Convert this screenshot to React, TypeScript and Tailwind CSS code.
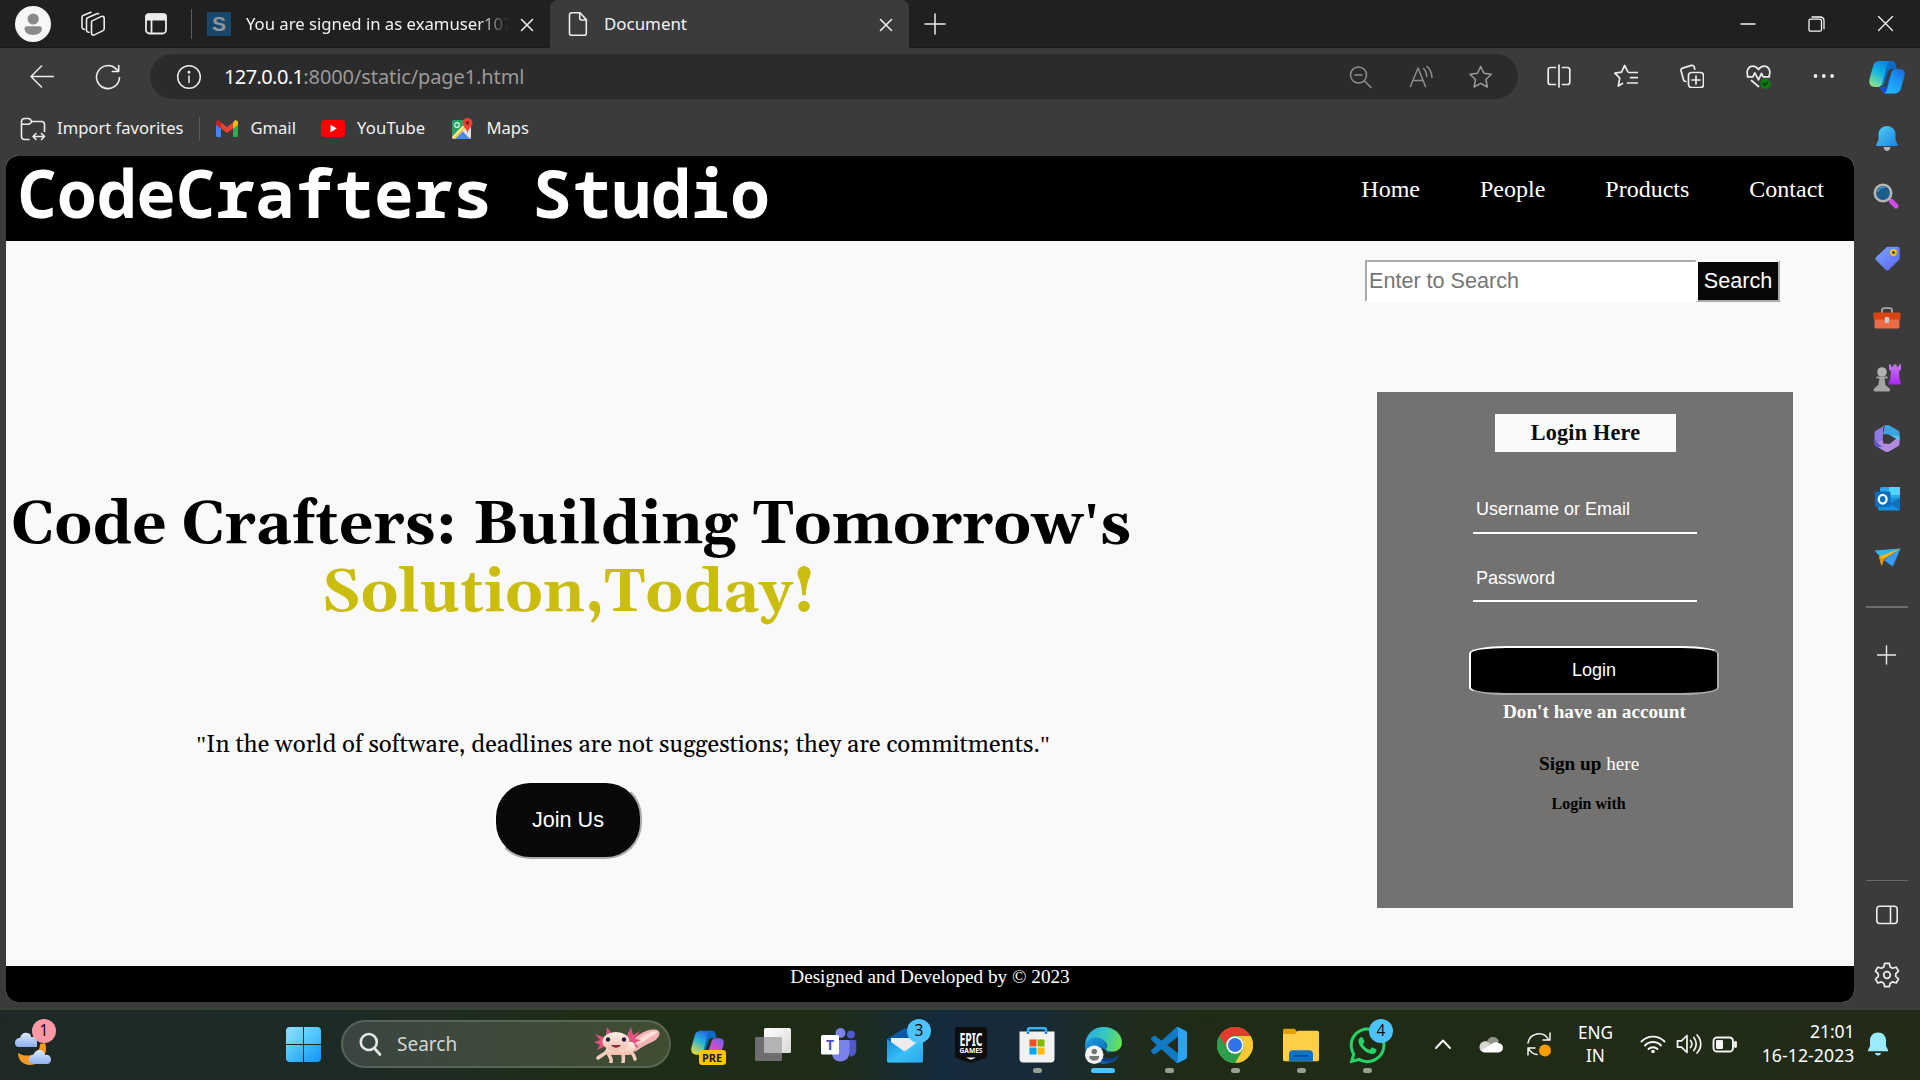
import type { ReactNode } from "react";
import { FaWhatsapp } from "react-icons/fa";

const ui = "font-['Segoe_UI','Noto_Sans',sans-serif]";
const arial = "font-['Liberation_Sans',Arial,sans-serif]";
const times = "font-['Liberation_Serif','Times_New_Roman',serif]";
const georgia = "font-['Gelasio',Georgia,'DejaVu_Serif',serif]";

type LineProps = { w?: number; h?: number; sw?: number; className?: string; children: ReactNode };

/* Outline icon drawn one unit per pixel */
function Line({ w = 24, h = 24, sw = 1.5, className = "text-[#ececec]", children }: LineProps) {
  return (
    <svg width={w} height={h} viewBox={`0 0 ${w} ${h}`} fill="none" stroke="currentColor" strokeWidth={sw} strokeLinecap="round" strokeLinejoin="round" className={`shrink-0 ${className}`}>
      {children}
    </svg>
  );
}

function Art({ w, h, children, className = "" }: { w: number; h: number; children: ReactNode; className?: string }) {
  return (
    <svg width={w} height={h} viewBox={`0 0 ${w} ${h}`} className={`shrink-0 ${className}`}>
      {children}
    </svg>
  );
}

function CloseX({ className = "" }: { className?: string }) {
  return (
    <Line w={14} h={14} sw={1.6} className={`text-[#ececec] ${className}`}>
      <path d="M1.5 1.5l11 11M12.5 1.5l-11 11" />
    </Line>
  );
}

/* ---------- Browser chrome ---------- */

function TabStrip() {
  return (
    <div className="flex h-12 bg-[#202020]">
      <div className="flex w-[550px] items-center border-b border-[#191919]">
        <Art w={36} h={36} className="ml-[15px]">
          <circle cx="18" cy="18" r="18" fill="#f7f7f7" />
          <circle cx="18.2" cy="13" r="5.6" fill="#8a8a8a" />
          <path d="M9.5 22.6c0-1.5 1-2.4 2.4-2.4h12.6c1.4 0 2.4.9 2.4 2.4 0 4.200-3.700 6.400-8.700 6.400s-8.700-2.200-8.700-6.400z" fill="#8a8a8a" />
        </Art>
        <Line w={26} h={26} sw={1.6} className="ml-[29px] text-[#ececec]">
          <path d="M11.500 11.200c0-.8.400-1.300 1.100-1.600l8.900-4.200c1.400-.6 2.700.2 2.700 1.700v10.600c0 .9-.4 1.500-1.200 1.900l-8.600 4.300c-1.500.7-2.900-.1-2.900-1.700z" />
          <path d="M9 21.300l-1.200-.3c-.9-.3-1.300-.9-1.300-1.800V8.400c0-.8.400-1.300 1.100-1.700l9.200-4c.7-.3 1.300-.2 1.800.1M4.500 18.500l-1.300-.6c-.8-.3-1.200-.9-1.200-1.700V6.300c0-.8.400-1.400 1.100-1.700L11 1.300" />
        </Line>
        <Line w={24} h={24} sw={1.8} className="ml-[38px] text-[#ececec]">
          <rect x="2" y="2.500" width="20" height="19" rx="3.500" />
          <path d="M2 4.500c0-1.300 1-2.400 2.500-2.400h15c1.500 0 2.500 1.100 2.500 2.400v3H2z" fill="currentColor" />
          <path d="M7.500 7v14" />
        </Line>
        <div className="ml-[23px] h-[30px] w-px bg-[#5c5c5c]" />
        <div className="ml-[15px] flex size-6 items-center justify-center bg-[#17476a] font-['Liberation_Sans'] text-[21px] leading-none font-bold text-[#8f969c]">S</div>
        <div className={`${ui} ml-[15px] w-[264px] overflow-hidden text-[16.7px] whitespace-nowrap text-[#f2f2f2] [mask-image:linear-gradient(to_right,black_232px,transparent_263px)]`}>
          You are signed in as examuser107
        </div>
        <CloseX className="mt-[2px] ml-[10px]" />
      </div>
      <div className="flex w-[359px] items-center rounded-t-lg bg-[#3b3b3b]">
        <Line w={20} h={26} sw={1.6} className="ml-[18px] text-[#ececec]">
          <path d="M3.500 1.800H12l6.300 6.800v13.600a2 2 0 0 1-2 2H3.500a2 2 0 0 1-2-2V3.800a2 2 0 0 1 2-2zM11.700 2v5a2 2 0 0 0 2 2h4.300" />
        </Line>
        <div className={`${ui} ml-[16px] text-[16.9px] text-[#f2f2f2]`}>Document</div>
        <CloseX className="mt-[2px] mr-[16px] ml-auto" />
      </div>
      <div className="flex flex-1 items-center border-b border-[#191919]">
        <Line w={22} h={22} sw={1.5} className="ml-[15px] text-[#ececec]">
          <path d="M11 1v20M1 11h20" />
        </Line>
        <div className="mr-[26px] ml-auto flex items-center gap-[52px]">
          <Line w={16} h={16} sw={1.3} className="text-[#f5f5f5]">
            <path d="M1 8h14" />
          </Line>
          <Line w={17} h={16} sw={1.3} className="text-[#f5f5f5]">
            <rect x="1" y="3.200" width="12.500" height="12" rx="1.500" />
            <path d="M4 1h8.500a3.500 3.500 0 0 1 3.500 3.500v8.200" />
          </Line>
          <Line w={17} h={17} sw={1.3} className="text-[#f5f5f5]">
            <path d="M1.500 1.500l14 14M15.500 1.500l-14 14" />
          </Line>
        </div>
      </div>
    </div>
  );
}

function Toolbar() {
  return (
    <div className="flex h-[57px] items-center pl-[30px]">
      <Line>
        <path d="M1 11.500h22.500M11.500 1L1 11.500l10.500 10.500" />
      </Line>
      <Line w={26} h={26} className="ml-[41px] text-[#ececec]" sw={1.6}>
        <path d="M24.500 13.500A11.500 11.500 0 1 1 21 4.800l2.500 2.400M23.700 1.500v6h-6.400" />
      </Line>
      <div className="ml-[29px] flex h-[45px] w-[1368px] items-center rounded-full bg-[#2b2b2b] pr-[25px] pl-[26px]">
        <Line w={26} h={26}>
          <circle cx="13" cy="13" r="11.300" />
          <path d="M13 12v6.500" />
          <circle cx="13" cy="8.300" r=".7" fill="currentColor" />
        </Line>
        <div className={`${ui} ml-[22px] text-[20px] whitespace-nowrap text-[#9a9a9a]`}>
          <span className="tracking-[-0.6px] text-white">127.0.0.1</span>
          <span className="tracking-[-0.1px]">:8000/static/page1.html</span>
        </div>
        <div className="ml-auto flex gap-9">
          <Line className="text-[#8f8f8f]">
            <circle cx="9.500" cy="10" r="8" />
            <path d="M6 10h7M15.500 16l6.500 6.500" />
          </Line>
          <Line className="text-[#8f8f8f]">
            <path d="M1.500 21.500L9 3l7.500 18.500M4 15.500h10M14.500 3.500c2 1.800 3 4.500 3.200 8M18 1.500c3 2.500 4.700 6.300 5 11" />
          </Line>
          <Line className="text-[#9a9a9a]">
            <path d="M11.700 1.500l3.200 6.800 7.500 1-5.500 5.200 1.400 7.500-6.600-3.700L5.100 22l1.400-7.500L1 9.300l7.500-1z" />
          </Line>
        </div>
      </div>
      <div className="ml-[29px] flex gap-[42px]">
        <Line sw={1.7}>
          <path d="M8.500 3.500h-5a2.300 2.300 0 0 0-2.300 2.300v12.400a2.300 2.300 0 0 0 2.300 2.300h5M15.500 3.500h5a2.300 2.300 0 0 1 2.300 2.300v12.400a2.300 2.300 0 0 1-2.300 2.300h-5M12 1v22" />
        </Line>
        <Line sw={1.7} className="ml-px text-[#ececec]">
          <path d="M8.500 19.500L4.300 22l1.400-7.800L.9 9.200l6.600-1 3.200-6.800 3 6.300M15 8.500h8.500M16.500 13.700h7M13.500 19h10" />
        </Line>
        <Line sw={1.7}>
          <rect x="8.500" y="8.500" width="15" height="15" rx="3" />
          <path d="M16 12v8M12 16h8M5.800 17.500c-1.300 0-2-.6-2.300-1.700L1 6.700c-.3-1.300.2-2.200 1.500-2.600l9-2.700c1.300-.3 2.200.2 2.600 1.400l.7 2.400" />
        </Line>
        <Line w={25} h={25} sw={1.7} className="-mr-px text-[#ececec]">
          <path d="M2 12.500C-.5 6.500 3 2.200 6.800 2.200c2.500 0 4.300 1.300 5.700 3.300 1.400-2 3.200-3.300 5.700-3.300 3.800 0 7.300 4.300 4.800 9.800M1.500 12.800h5.300l2-4 3.700 7 3-6.500 1.700 3.500h6.300M5.500 16.500l7 6" />
          <circle cx="19.500" cy="19.500" r="5.200" fill="#107c10" stroke="none" />
          <path d="M17.300 19.700l1.600 1.600 3-3.200" stroke="#0a3d0a" />
        </Line>
        <Line>
          <g fill="currentColor" stroke="none">
            <circle cx="3.500" cy="12" r="1.900" />
            <circle cx="11.800" cy="12" r="1.900" />
            <circle cx="20.100" cy="12" r="1.900" />
          </g>
        </Line>
      </div>
    </div>
  );
}

function Bookmarks() {
  return (
    <div className={`${ui} flex h-[51px] items-center pb-1 text-[16.6px] text-[#f2f2f2]`}>
      <Line w={26} h={24} sw={1.6} className="ml-5 text-[#ececec]">
        <path d="M9 22.500H4.500a3 3 0 0 1-3-3v-15a3 3 0 0 1 3-3h3.700c1 0 1.600.3 2.200 1l1.600 2h9.500a3 3 0 0 1 3 3v7M1.500 7.300h6.700c1 0 1.600-.3 2.200-1l1.600-1.900M13.500 19.500h10M16 16.500l-3 3 3 3M21.500 16.500l3 3-3 3" />
      </Line>
      <span className="ml-[11px]">Import favorites</span>
      <div className="ml-4 h-6 w-px bg-[#5a5a5a]" />
      <Art w={22} h={17} className="ml-4">
        <path d="M0 2v13.500C0 16.300.7 17 1.500 17H5V8.300z" fill="#4285f4" />
        <path d="M22 2v13.500c0 .8-.7 1.500-1.500 1.500H17V8.300z" fill="#34a853" />
        <path d="M17 2.500v6l5-3.700V2.700C22 .7 20-.3 18.400.8z" fill="#fbbc04" />
        <path d="M5 8.500v-6l6 4.500 6-4.500v6L11 13z" fill="#ea4335" />
        <path d="M0 2.700v2.100l5 3.700v-6L3.600.8C2-.3 0 .7 0 2.700z" fill="#c5221f" />
      </Art>
      <span className="ml-3">Gmail</span>
      <Art w={24} h={17} className="ml-[25px]">
        <rect width="24" height="17" rx="4" fill="#f00" />
        <path d="M9.500 4.800v7.400l6.300-3.700z" fill="#fff" />
      </Art>
      <span className="ml-3 tracking-[0.2px]">YouTube</span>
      <Art w={22} h={22} className="ml-[27px]">
        <defs>
          <clipPath id="map"><rect x="0" y="2" width="19" height="19" rx="2" /></clipPath>
        </defs>
        <g clipPath="url(#map)">
          <rect y="2" width="19" height="19" fill="#1fa463" />
          <path d="M19 6v15h-3L8 13z" fill="#dedede" />
          <path d="M9.500 12L1 21h17z" fill="#4a89f3" />
          <path d="M0 18.500L14 4l3 3L3 21H0z" fill="#ffd04b" />
          <path d="M0 20.500L12 8" stroke="#fff" strokeWidth="1" />
        </g>
        <circle cx="5" cy="7" r="2.300" fill="none" stroke="#e8f5ee" strokeWidth="1.200" />
        <path d="M15.500 0a5 5 0 0 1 5 5c0 3.500-4 5-5 10-1-5-5-6.500-5-10a5 5 0 0 1 5-5z" fill="#ea4335" />
        <circle cx="15.500" cy="5" r="1.900" fill="#8c1f18" />
      </Art>
      <span className="ml-3">Maps</span>
    </div>
  );
}

/* ---------- Edge sidebar ---------- */

function CopilotMark({ id, size, pre }: { id: string; size: number; pre?: boolean }) {
  const a = pre ? ["#2463e8", "#27b4d8", "#e8d93c"] : ["#0a84e0", "#14b4e4", "#8de68a"];
  const b = pre ? ["#7b5cf0", "#d94fc0", "#ff8a5c"] : ["#1a6fe0", "#1c9cf5", "#22b8ff"];
  return (
    <svg width={size} height={size} viewBox="0 0 36 36" className={pre ? "shrink-0" : "-mt-[3px] shrink-0"}>
      <defs>
        <linearGradient id={`${id}a`} x1=".7" y1="0" x2=".2" y2="1">
          <stop offset="0" stopColor={a[0]} />
          <stop offset=".45" stopColor={a[1]} />
          <stop offset="1" stopColor={a[2]} />
        </linearGradient>
        <linearGradient id={`${id}b`} x1=".8" y1="0" x2=".2" y2="1">
          <stop offset="0" stopColor={b[0]} />
          <stop offset=".5" stopColor={b[1]} />
          <stop offset="1" stopColor={b[2]} />
        </linearGradient>
      </defs>
      <path d="M17 2h6c2 0 3 1 3.600 3l1.200 5h-5c-2.500 0-3.500 1.500-4 3.500L16 23c-.6 2.500-1 4-3 4z" fill="#0b6cc4" />
      <path d="M9 28h6c2 0 3-1 3.500-3l2-8 3 16c-2 2-8 2.500-10 0-1.500-2-2-5-4.500-5z" fill="#1450d2" />
      <path d="M11 2h11c-2.500 0-3.500 2-4.200 4.500L14 22c-.8 3.500-2 6-5 6H6c-4.500 0-6.500-3-5.500-8L4 7.500C5 3.500 7.500 2 11 2z" fill={`url(#${id}a)`} />
      <path d="M25 34.500H14c2.500 0 3.500-2 4.200-4.500L22 14.500c.8-3 2-4.500 5-4.500h3c4.500 0 6.500 2 5.500 7L32 29c-1 4-3.500 5.500-7 5.500z" fill={`url(#${id}b)`} />
    </svg>
  );
}

function SideCell({ children }: { children: ReactNode }) {
  return <div className="flex h-[60px] w-full items-center justify-center">{children}</div>;
}

function Sidebar() {
  return (
    <div className="flex w-[66px] flex-col items-center bg-[#3b3b3b] pb-[3px]">
      <SideCell><CopilotMark id="cp" size={36} /></SideCell>
      <SideCell>
        <Art w={22} h={25}>
          <defs><linearGradient id="bl" x1="0" y1="0" x2="1" y2="1"><stop stopColor="#4fd0f7" /><stop offset="1" stopColor="#1d83e2" /></linearGradient></defs>
          <path d="M7.500 21h7c-.5 2.500-1.800 4-3.500 4s-3-1.500-3.500-4z" fill="#b8b8b8" />
          <path d="M11 0c5 0 8.500 3.700 8.500 8.500V14l2.200 4.500c.4.900 0 1.500-.9 1.500H1.200c-.9 0-1.300-.6-.9-1.500L2.500 14V8.500C2.500 3.700 6 0 11 0z" fill="url(#bl)" />
        </Art>
      </SideCell>
      <SideCell>
        <Art w={26} h={26} className="-mt-1 -ml-0.5">
          <path d="M16 16l4 4" stroke="#8c8c8c" strokeWidth="3" />
          <path d="M18.500 18.500l4.500 4.500" stroke="#d04bf0" strokeWidth="5" strokeLinecap="round" />
          <circle cx="10" cy="10" r="8.200" fill="#1c5d8c" stroke="#b5b5b5" strokeWidth="2.600" />
          <path d="M5 9a5.500 5.500 0 0 1 7-4.500" stroke="#4a93c4" strokeWidth="1.500" fill="none" />
        </Art>
      </SideCell>
      <SideCell>
        <Art w={25} h={25}>
          <defs><linearGradient id="tg" x1="0" y1="0" x2="1" y2="1"><stop stopColor="#7aa8ff" /><stop offset="1" stopColor="#5b62f2" /></linearGradient></defs>
          <path d="M13 .8h9.500c1.300 0 2.200.9 2.200 2.200V12c0 .8-.2 1.400-.8 2L14 23.800c-1 1-2.300 1-3.300 0L1.200 14.300c-1-1-1-2.300 0-3.200l10-9.500c.5-.5 1.100-.8 1.800-.8z" fill="url(#tg)" />
          <circle cx="18.500" cy="6.500" r="2.500" fill="#4a4320" stroke="#f5c518" strokeWidth="1.800" />
        </Art>
      </SideCell>
      <SideCell>
        <Art w={28} h={22}>
          <path d="M9 6V3.500C9 2 9.800 1.200 11.300 1.200h5.400C18.200 1.200 19 2 19 3.500V6" fill="none" stroke="#a8a8a8" strokeWidth="1.800" />
          <rect x="1.500" y="10" width="25" height="11.500" rx="1.500" fill="#ea6b45" />
          <rect x=".5" y="5.500" width="27" height="7" rx="1.200" fill="#d8430f" />
          <rect x="11.800" y="10" width="4.400" height="6" rx="1" fill="#c9c9c9" />
        </Art>
      </SideCell>
      <SideCell>
        <Art w={28} h={28}>
          <defs><linearGradient id="rk" x1="0" y1="0" x2="0" y2="1"><stop stopColor="#c77bf5" /><stop offset="1" stopColor="#a824f2" /></linearGradient></defs>
          <path d="M16 .5h2v2h2.500V.5h3v2H26V.5h2v5l-2 2 .6 8.500 1.200 2v2.500H15.700V18l1.300-2L18 7.500l-2-2z" fill="url(#rk)" />
          <circle cx="9" cy="8" r="4.800" fill="#b2b2b2" />
          <path d="M3.500 12.500h11v2h-3l1 6.500 4 3.500c1 1 .8 3-.8 3H2c-1.600 0-1.800-2-.8-3l4-3.500 1.200-6.500h-3z" fill="#a3a3a3" />
        </Art>
      </SideCell>
      <SideCell>
        <Art w={26} h={27}>
          <path d="M11 0l4 .3 9 5.200c1 .6 1.500 1.500 1.500 2.600V15l-8.500-4.500L9 9z" fill="#3fa3e0" />
          <path d="M11 .3L2.500 5.200C1 6 .5 7 .5 8.500v10c0 1 .4 2 1.300 2.500L4 22.200 9 19V3.500z" fill="#8f7ae0" />
          <path d="M.8 19.300L8.500 15l1 3.500 6 .5 10-8v7.500c0 1.200-.5 2-1.500 2.700l-9 5.200c-1.300.7-2.700.7-4 0L2.200 21.200z" fill="#b08be0" />
          <path d="M25.500 11v4.500l-8-4.500-2.500-1z" fill="#4fc7f0" />
          <path d="M.5 9c0 6 2.500 10 8 12L4 22.500 1.500 21C.8 20.300.5 19.500.5 18.500z" fill="#5a57c0" />
          <circle cx="13" cy="13.500" r="4.300" fill="#3b3b3b" />
        </Art>
      </SideCell>
      <SideCell>
        <Art w={25} h={25}>
          <rect x="5" y="1" width="20" height="15" rx="1.500" fill="#28a8ea" />
          <rect x="14" y="1" width="11" height="8" fill="#50d9ff" />
          <path d="M3 12h22v11c0 .8-.6 1.500-1.500 1.500h-19C3.600 24.500 3 23.800 3 23z" fill="#1490df" />
          <path d="M25 12v12L14 17.500z" fill="#0f6fc0" />
          <rect y="5.500" width="15.500" height="15.500" rx="1.500" fill="#0f6cbd" />
          <ellipse cx="7.700" cy="13.200" rx="3.900" ry="4.300" fill="none" stroke="#fff" strokeWidth="2.300" />
        </Art>
      </SideCell>
      <SideCell>
        <Art w={27} h={20}>
          <path d="M.5 2.500L26.500.5 8 11z" fill="#32b5e8" />
          <path d="M26.500.5L19 18.500 10 12z" fill="#2b86ea" />
          <path d="M26.500.5L10 12l8 6z" fill="#3b9cf5" />
          <path d="M26.500.5L5 8.500l2 7.500 1 1.500 1.500-6z" fill="#fbb81c" />
          <path d="M5 8.500l2.500 9.500 2.500-6z" fill="#e8930c" />
        </Art>
      </SideCell>
      <div className="mt-[18px] h-[2px] w-[42px] bg-[#6e6e6e]" />
      <div className="mt-[17px] flex h-[60px] items-center">
        <Line w={20} h={20} sw={1.4}><path d="M9.500 1v18M.5 10h18" /></Line>
      </div>
      <div className="mt-auto h-px w-[42px] bg-[#6a6a6a]" />
      <div className="mt-1 flex h-[60px] items-center">
        <Line w={24} h={20} sw={1.6}>
          <rect x="1.800" y="1.300" width="20.400" height="17.200" rx="3" />
          <path d="M15.500 1.500v17" />
        </Line>
      </div>
      <SideCell>
        <Line w={26} h={26} sw={1.7}>
          <circle cx="13" cy="13" r="3.300" />
          <path d="M10.700 1.300h4.600l.9 3.700 2.300 1.300 3.700-1.100 2.300 4-2.800 2.600v2.600l2.800 2.600-2.300 4-3.700-1.100-2.300 1.300-.9 3.500h-4.600l-.9-3.500-2.300-1.300-3.700 1.100-2.300-4 2.800-2.600v-2.600L1.500 9.200l2.300-4 3.700 1.100L9.800 5z" />
        </Line>
      </SideCell>
    </div>
  );
}

/* ---------- Web page ---------- */

function LoginCard() {
  return (
    <div className={`${times} mt-[90px] ml-[246px] flex h-[516px] w-[416px] shrink-0 flex-col items-start bg-[#737270]`}>
      <div className="mt-[22px] ml-[118px] flex h-[38px] w-[181px] items-center justify-center bg-[#f9fbfa] text-[22.2px] font-bold tracking-[0.2px] text-[#0a0a0a]">
        Login Here
      </div>
      <div className={`${arial} mt-[38px] ml-[96px] flex h-[44px] w-[224px] items-start border-b-2 border-white pt-[6px] pl-[3px] text-[18px] text-white`}>
        Username or Email
      </div>
      <div className={`${arial} mt-[24px] ml-[96px] flex h-[44px] w-[224px] items-start border-b-2 border-white pt-[7px] pl-[3px] text-[18px] text-white`}>
        Password
      </div>
      <button className={`${arial} mt-[44px] ml-[92px] h-[49px] w-[250px] rounded-[15%] border-2 border-white bg-black text-[18px] text-white [border-style:outset]`}>
        Login
      </button>
      <div className="mt-[3px] ml-[126px] text-[19.2px] leading-[27px] font-bold whitespace-nowrap text-white">Don't have an account</div>
      <div className="mt-[25px] ml-[162px] text-[19.2px] leading-[27px] text-white">
        <span className="font-bold text-black">Sign up</span> here
      </div>
      <div className="mt-[13px] ml-[174.5px] text-[16px] leading-[27px] font-bold text-black">Login with</div>
    </div>
  );
}

function Page() {
  return (
    <div className="ml-1.5 flex h-[846px] flex-col overflow-hidden rounded-xl bg-[#f9f9f9]">
      <div className="flex h-[85px] justify-between bg-black pr-[30px] text-white">
        <div className="mt-px ml-[11.5px] font-['Noto_Sans_Mono','DejaVu_Sans_Mono',monospace] text-[66px] leading-[70px] font-bold">CodeCrafters Studio</div>
        <div className={`${times} mt-[19px] flex gap-[60px] text-[24px] leading-[28px]`}>
          <span>Home</span>
          <span>People</span>
          <span>Products</span>
          <span>Contact</span>
        </div>
      </div>
      <div className="flex h-[725px]">
        <div className="flex w-[1125px] flex-col items-center">
          <div className={`${georgia} mt-[251px] text-center text-[60px] leading-[68px] font-bold text-black`}>
            <div className="pl-[5px] whitespace-nowrap">
              Code Crafters: Building Tomorrow<span className={`${times} leading-[0]`}>'</span>s
            </div>
            <div className="text-[#cabd0e]">Solution,Today!</div>
          </div>
          <div className={`${georgia} mt-[103px] pl-[109px] text-[24px] leading-[28px] whitespace-nowrap text-black`}>
            <span className={`${times} leading-[0]`}>"</span>In the world of software, deadlines are not suggestions; they are commitments.<span className={`${times} leading-[0]`}>"</span>
          </div>
          <button className={`${arial} mt-[22px] mr-px h-[78px] w-[148px] rounded-[36px] border-2 border-white bg-[#080808] text-[21.6px] text-white [border-style:outset]`}>
            Join Us
          </button>
        </div>
        <div className="flex flex-col">
          <div className={`${arial} mt-[19px] ml-[234px] flex h-[42px] w-[415px] text-[21.6px]`}>
            <div className="flex w-[332px] items-center border-2 border-white bg-white pl-[2px] text-[#757575] [border-style:inset]">Enter to Search</div>
            <button className="-ml-px w-[84px] border-2 border-white bg-[#080808] text-white [border-style:outset]">Search</button>
          </div>
          <LoginCard />
        </div>
      </div>
      <div className={`${times} flex-1 bg-black text-center text-[19.2px] leading-[22px] text-white`}>Designed and Developed by © 2023</div>
    </div>
  );
}

/* ---------- Windows taskbar ---------- */

function Badge({ children, className }: { children: ReactNode; className: string }) {
  return <div className={`absolute flex size-6 items-center justify-center rounded-full text-[15.500px] leading-none text-[#111] ${className}`}>{children}</div>;
}

function TaskApp({ children, mark = "none" }: { children: ReactNode; mark?: "none" | "dot" | "bar" }) {
  return (
    <div className="relative flex w-[66px] flex-col items-center pt-[17px]">
      <div className="flex h-9 items-center">{children}</div>
      {mark === "dot" && <div className="mt-[5px] h-[5px] w-[9px] rounded-full bg-[#9a9f94]" />}
      {mark === "bar" && <div className="mt-[5px] h-[5px] w-6 rounded-full bg-[#4cc2ff]" />}
    </div>
  );
}

function Weather() {
  return (
    <div className="relative ml-[14px] w-[44px]">
      <Art w={40} h={52} className="mt-[5px]">
        <defs><linearGradient id="wc" x1="0" y1="0" x2="0" y2="1"><stop stopColor="#dbe8ff" /><stop offset="1" stopColor="#8db0ee" /></linearGradient></defs>
        <path d="M31 28c4 10-4 22-15 22C9 50 4 45 4 38c8 5 22 3 22-9z" fill="#f79a1c" />
        <path d="M5 32c-3 0-4-2-4-4 0-3 2-5 5-5 1-4 4-6 7-5 3 0 4 2 4 4l6 0v10z" fill="url(#wc)" />
        <path d="M19 49c-3 0-4.500-2-4.500-4s1.500-5 5-5c.5-3 3-5 6-5s5 2 5.500 5c4-1 6 1.500 6 4.500s-2 4.500-4 4.500z" fill="url(#wc)" />
      </Art>
      <Badge className="top-[9px] left-[18px] bg-[#ff99a4]">1</Badge>
    </div>
  );
}

function Axolotl() {
  return (
    <svg width="66" height="37" viewBox="0 0 66 37" className="shrink-0">
      <defs><linearGradient id="ax" x1="0" y1="0" x2="0" y2="1"><stop stopColor="#fff1ea" /><stop offset="1" stopColor="#f3bfae" /></linearGradient></defs>
      <path d="M36 17C44 8 54 2 63 4c5 2 2 9-5 12-7 3-12 6-17 10z" fill="#f6b3b5" />
      <path d="M37 20C45 12 55 5 63 5c1 3-8 6-14 11z" fill="#fde0da" />
      <path d="M9 11L1 8l5 6-6 2 6 3-3 5 9-4zM12 9l1-8 5 7zM33 9l4-8 2 8 7-4-5 8 6 1-6 3 4 5-9-3z" fill="#e0557f" />
      <path d="M14 24c-3 5-7 5-10 8M14 27c2 4 4 6 3 9M34 25c5 2 6 4 7 8M29 26c0 5 1 7 0 10" stroke="#f6cdbd" strokeWidth="3.500" fill="none" strokeLinecap="round" />
      <path d="M26 16h12c5 2 4 11-3 13H16c-6-2-5-9 0-11z" fill="url(#ax)" />
      <ellipse cx="22" cy="15.500" rx="13.500" ry="9.500" fill="url(#ax)" />
      <circle cx="14" cy="13.500" r="2.200" fill="#1d2240" />
      <circle cx="30" cy="13.500" r="2.200" fill="#1d2240" />
      <path d="M17 19c2 3.500 8 3.500 10 0z" fill="#8d2f3c" />
    </svg>
  );
}

function EdgeIcon() {
  return (
    <svg width="37" height="37" viewBox="0 0 36 36">
      <defs>
        <linearGradient id="e1" x1="0" y1="0.3" x2="1" y2=".5"><stop stopColor="#2aa9e0" /><stop offset=".5" stopColor="#35c6c0" /><stop offset="1" stopColor="#66e052" /></linearGradient>
        <linearGradient id="e2" x1="0" y1="0" x2="1" y2="1"><stop stopColor="#1b9de2" /><stop offset="1" stopColor="#0c4d9a" /></linearGradient>
      </defs>
      <path d="M0 19C0 7 8 0 18 0c10.500 0 18 7 18 15 0 6-5 9-10 9-4.500 0-6-1.700-5.500-3 2-3 .5-8.500-6.500-8.500C7.500 12.500 2 15 0 19z" fill="url(#e1)" />
      <path d="M0 19c1-6 7-9.500 13-8.500 5.500 1 9 5 7.500 10.500-1 1.500.5 3 5 3-1.500 1.500-4 1-5-.5C17 19 14 21 14.500 25c.5 5 6 7.500 11 6.500 3-.5 6-2.500 8-4.500C31 32.500 25.500 36 18 36 7.500 36 0 28.500 0 19z" fill="url(#e2)" />
      <path d="M14.500 22c-1 8 10 12 19 5-4 6-11 8-16 6-4-2-5-7-3-11z" fill="#0b3f86" />
      <circle cx="9" cy="27" r="9" fill="#f4f4f4" />
      <circle cx="9" cy="23.800" r="2.700" fill="#777" />
      <path d="M4.300 28.300h9.400c.3 3-1.800 4.500-4.700 4.500s-5-1.500-4.700-4.500z" fill="#777" />
    </svg>
  );
}

function Taskbar() {
  return (
    <div className={`${ui} flex h-[72px] border-t-2 border-[#3a4136] bg-[linear-gradient(90deg,#1e2926_0px,#1c2a28_280px,#1d2b21_450px,#1e2e16_580px,#1f2c15_820px,#1a2c28_880px,#152a3c_940px,#182a36_1040px,#1e2c20_1110px,#202b15_1200px,#212b17_1920px)] text-white`}>
      <Weather />
      <div className="mt-[17px] ml-[228px] grid size-[35px] grid-cols-2 gap-px">
        <div className="rounded-tl-sm bg-linear-to-br from-[#8fe0ff] to-[#4cc8fb]" />
        <div className="rounded-tr-sm bg-linear-to-br from-[#6ad6ff] to-[#35b8fa]" />
        <div className="rounded-bl-sm bg-linear-to-br from-[#5fd0ff] to-[#26a9f8]" />
        <div className="rounded-br-sm bg-linear-to-br from-[#3fbcfb] to-[#0f94f5]" />
      </div>
      <div className="mt-[10px] ml-[20px] flex h-[48px] w-[330px] items-center rounded-full border-2 border-white/15 bg-linear-to-r from-[#3b4541] to-[#3f4e31] pr-[9px] pl-[16px]">
        <Line w={23} h={25} sw={2.600} className="text-[#e4e7e5]">
          <circle cx="9.800" cy="10" r="8" />
          <path d="M15.500 16.500l5.500 6" />
        </Line>
        <span className="mt-px ml-[15px] text-[19px] text-[#d3d7d3]">Search</span>
        <div className="ml-auto"><Axolotl /></div>
      </div>
      <div className="ml-[3px] flex">
        <TaskApp>
          <div className="relative">
            <CopilotMark id="pre" size={33} pre />
            <span className="absolute top-[21px] left-[8px] flex h-[15px] w-[27px] items-center justify-center rounded-[3px] bg-[#ffc400] text-[11px] leading-none font-bold text-[#1c1c1c]">PRE</span>
          </div>
        </TaskApp>
        <TaskApp>
          <Art w={36} h={34}>
            <defs><linearGradient id="tv" x1="0" y1="0" x2="1" y2="1"><stop stopColor="#fff" /><stop offset="1" stopColor="#d9d9d9" /></linearGradient></defs>
            <rect y="9" width="27" height="24" rx="1.500" fill="#6e6e6e" />
            <rect x="9" y="0" width="27" height="25" rx="1.500" fill="url(#tv)" />
            <rect x="9" y="9" width="18" height="16" fill="#b3b3b3" />
          </Art>
        </TaskApp>
        <TaskApp>
          <Art w={36} h={34}>
            <circle cx="30" cy="6.500" r="4" fill="#5059c9" />
            <path d="M24 12h9.500c1 0 1.800.8 1.800 1.800V22c0 4-2.600 6.500-6 6.500z" fill="#5059c9" />
            <circle cx="19.500" cy="5" r="5" fill="#7b83eb" />
            <path d="M12 12h15c1 0 1.500.7 1.500 1.700V24c0 6-4 9.500-9 9.500S11 30 11 25z" fill="#7b83eb" />
            <rect y="7" width="18" height="19.500" rx="1.500" fill="#fff" />
            <text x="9" y="22" fontSize="14" fontWeight="700" textAnchor="middle" fill="#4b53bc">T</text>
          </Art>
        </TaskApp>
        <TaskApp>
          <Art w={36} h={35}>
            <defs><linearGradient id="ml" x1="0" y1="0" x2="1" y2="1"><stop stopColor="#1a8be0" /><stop offset=".5" stopColor="#2fb8f3" /><stop offset="1" stopColor="#0f7fdc" /></linearGradient></defs>
            <path d="M0 11L18 0l18 11v3H0z" fill="#0b5aa8" />
            <path d="M4 10h28v8L18 24 4 18z" fill="#ececec" />
            <path d="M0 11l18 13L36 9.500V33c0 .8-.6 1.500-1.500 1.500h-33C.7 34.500 0 33.800 0 33z" fill="url(#ml)" />
            <path d="M0 34L36 11v22c0 .8-.6 1.500-1.500 1.500h-33z" fill="#42c8f8" opacity=".55" />
          </Art>
          <Badge className="top-[9px] left-[35px] bg-[#4cc2ff]">3</Badge>
        </TaskApp>
        <TaskApp>
          <Art w={32} h={36}>
            <path d="M2.500 0h27C31 0 32 1 32 2.500v26c0 1.500-.6 2.200-2 2.800L16 36 2 31.300c-1.400-.6-2-1.300-2-2.800v-26C0 1 1 0 2.500 0z" fill="#0d0d0d" />
            <text x="16" y="18.500" fontSize="17" fontWeight="700" textAnchor="middle" textLength="23" lengthAdjust="spacingAndGlyphs" fill="#fff">EPIC</text>
            <text x="16" y="26" fontSize="6.500" fontWeight="700" textAnchor="middle" textLength="23" lengthAdjust="spacingAndGlyphs" fill="#fff">GAMES</text>
            <path d="M11 30.500h10l-5 2.200z" fill="#fff" />
          </Art>
        </TaskApp>
        <TaskApp mark="dot">
          <Art w={36} h={36}>
            <path d="M9 6V3c0-1 .7-1.700 1.700-1.700h14.600C26.300 1.300 27 2 27 3v3" fill="none" stroke="#35b4f0" strokeWidth="2.400" />
            <path d="M.5 4.500h35V32c0 2-1.300 3.500-3.500 3.500H4C1.800 35.500.5 34 .5 32z" fill="#f1f1f1" />
            <path d="M9 7V4.500M27 7V4.500" stroke="#1c7fc4" strokeWidth="2.400" />
            <rect x="10.500" y="12.500" width="7" height="7" fill="#f25022" />
            <rect x="18.500" y="12.500" width="7" height="7" fill="#7fba00" />
            <rect x="10.500" y="20.500" width="7" height="7" fill="#00a4ef" />
            <rect x="18.500" y="20.500" width="7" height="7" fill="#ffb900" />
          </Art>
        </TaskApp>
        <TaskApp mark="bar"><EdgeIcon /></TaskApp>
        <TaskApp mark="dot">
          <svg width="36" height="36" viewBox="0 0 100 100">
            <path fillRule="evenodd" fill="#1279c4" d="M96.460 10.800 75.860.880a6.230 6.230 0 0 0-7.100 1.200L29.350 38.040 12.190 25.010a4.160 4.160 0 0 0-5.320.240L1.370 30.260a4.170 4.170 0 0 0 0 6.160L16.250 50 1.360 63.580a4.170 4.170 0 0 0 .010 6.160l5.500 5.010a4.160 4.160 0 0 0 5.320.240l17.160-13.030 39.400 35.960a6.220 6.220 0 0 0 7.100 1.200l20.600-9.900A6.250 6.250 0 0 0 100 83.580V16.410a6.250 6.250 0 0 0-3.540-5.630zM75.020 72.700 45.110 50l29.900-22.700z" />
            <path fill="#2aa3f0" d="M75.860.880 96.460 10.800A6.250 6.250 0 0 1 100 16.410v67.170a6.250 6.250 0 0 1-3.550 5.640l-20.600 9.900q-3 1-6-1 5 0 5.170-5V6.500q-.5-4.500-5-4.500 3-2.200 5.840-1.120z" />
          </svg>
        </TaskApp>
        <TaskApp mark="dot">
          <svg width="36" height="36" viewBox="0 0 36 36">
            <circle cx="18" cy="18" r="18" fill="#34a853" />
            <path d="M2.400 9A18 18 0 0 1 33.600 9H18a9 9 0 0 0-7.800 13.500z" fill="#e33b2e" />
            <path d="M33.600 9A18 18 0 0 1 18 36l7.800-13.500A9 9 0 0 0 18 9z" fill="#fcc934" />
            <path d="M2.400 9l7.800 13.500A9 9 0 0 0 25.800 22.500L18 36A18 18 0 0 1 2.400 9z" fill="#2f9e4c" />
            <circle cx="18" cy="18" r="8.700" fill="#fff" />
            <circle cx="18" cy="18" r="7" fill="#2f74e8" />
          </svg>
        </TaskApp>
        <TaskApp mark="dot">
          <Art w={36} h={34}>
            <path d="M0 2.500C0 1.500.7.800 1.700.800h9.800L15 4.500v3H0z" fill="#e6a10a" />
            <path d="M0 6h12l3-3.200h19.300c1 0 1.700.7 1.700 1.700V31.500c0 1-.7 1.700-1.700 1.700H1.700C.7 33.200 0 32.500 0 31.500z" fill="#ffcf48" />
            <path d="M6 33.200V26c0-2.200 1.600-3.800 3.800-3.800h16.400c2.200 0 3.800 1.600 3.800 3.800v7.200z" fill="#1072c6" />
            <path d="M11.500 27.800h13" stroke="#0a4a8c" strokeWidth="1.800" strokeLinecap="round" />
          </Art>
        </TaskApp>
        <TaskApp mark="dot">
          <FaWhatsapp className="size-[41px] text-[#25d366]" />
          <Badge className="top-[9px] left-[35px] bg-[#4cc2ff]">4</Badge>
        </TaskApp>
      </div>
      <div className="ml-[33.500px] flex h-[68px] items-center">
        <Line w={18} h={12} sw={2} className="text-[#f5f5f5]"><path d="M2 10l7-7.500 7 7.500" /></Line>
        <Art w={24} h={17} className="ml-[27px]">
          <path d="M8 5.500C9 2 12 .5 14.500 1c3 .3 5 2 5.500 5l-10 4z" fill="#8f948b" />
          <path d="M.5 11C.5 7 4 4.500 7.500 5.300L18 12.500 5 16C2 16 .5 13.500.5 11z" fill="#d4d6d1" />
          <path d="M2 14l9-4.500c3-3.500 7-4 9-2.300 2.500.3 4 2.300 4 4.600 0 2.700-2 4.700-4.500 4.700H6c-2 0-3.200-1-4-2.500z" fill="#fff" />
        </Art>
        <Line w={26} h={26} sw={1.500} className="ml-[23px] text-[#f5f5f5]">
          <path d="M2 12A11 11 0 0 1 22.500 8.500M24 2v7h-7M2 24v-7h7M2.500 17.500A11 11 0 0 0 11 23.500" />
          <circle cx="19" cy="19.500" r="6" fill="#ff9d00" stroke="none" />
        </Line>
        <div className="ml-[26px] flex w-[36px] flex-col items-center text-[17.200px] leading-[23px]">
          <span>ENG</span>
          <span>IN</span>
        </div>
        <Line w={26} h={20} sw={1.900} className="ml-[26px] text-[#f5f5f5]">
          <path d="M1.500 7.500a16 16 0 0 1 23 0M5 11.500a11 11 0 0 1 16 0M8.500 15a6.500 6.500 0 0 1 9 0" />
          <circle cx="13" cy="17.500" r="1.800" fill="currentColor" stroke="none" />
        </Line>
        <Line w={26} h={22} sw={1.700} className="ml-[10px] text-[#f5f5f5]">
          <path d="M1.500 7.800h4L11 2.500v17l-5.500-5.300h-4zM14.500 7.500c1.600 2 1.600 5 0 7M17.800 4.500c3.200 3.800 3.200 9.200 0 13M21 2c5 5.300 5 12.700 0 18" />
        </Line>
        <Line w={26} h={17} sw={1.900} className="ml-[10px] text-[#f5f5f5]">
          <rect x="1.500" y="1.500" width="19.500" height="14" rx="3.500" />
          <rect x="4" y="4" width="7" height="9" rx="1" fill="currentColor" stroke="none" />
          <path d="M23.500 6.500v4" strokeWidth="2.800" />
        </Line>
        <div className="-mt-[3px] ml-[17px] flex w-[100px] flex-col items-end text-[17.600px] leading-[24px]">
          <span className="tracking-[-0.1px]">21:01</span>
          <span className="tracking-[0.1px] whitespace-nowrap">16-12-2023</span>
        </div>
        <Art w={22} h={24} className="ml-[12px]">
          <path d="M8 21h6c-.3 1.700-1.500 2.500-3 2.500S8.300 22.700 8 21z" fill="#99ebff" />
          <path d="M11 .5c4.700 0 8 3.500 8 8V14l2 4c.3.700 0 1.300-.8 1.300H1.800c-.8 0-1.100-.6-.8-1.300l2-4V8.500c0-4.500 3.300-8 8-8z" fill="#99ebff" />
        </Art>
      </div>
    </div>
  );
}

export default function App() {
  return (
    <div className="flex h-[1080px] w-[1920px] flex-col overflow-hidden bg-[#3b3b3b]">
      <TabStrip />
      <div className="flex h-[960px]">
        <div className="flex w-[1854px] flex-col">
          <Toolbar />
          <Bookmarks />
          <Page />
        </div>
        <Sidebar />
      </div>
      <Taskbar />
    </div>
  );
}
